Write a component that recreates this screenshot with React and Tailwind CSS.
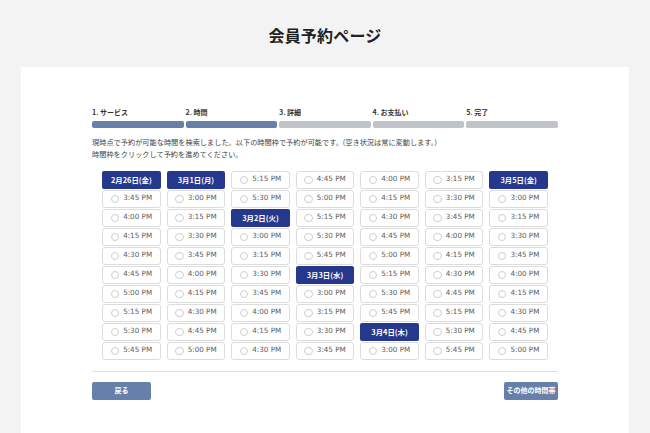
const steps = ["1. サービス", "2. 時間", "3. 詳細", "4. お支払い", "5. 完了"];

const columns = [
  ["2月26日(金)", "3:45", "4:00", "4:15", "4:30", "4:45", "5:00", "5:15", "5:30", "5:45"],
  ["3月1日(月)", "3:00", "3:15", "3:30", "3:45", "4:00", "4:15", "4:30", "4:45", "5:00"],
  ["5:15", "5:30", "3月2日(火)", "3:00", "3:15", "3:30", "3:45", "4:00", "4:15", "4:30"],
  ["4:45", "5:00", "5:15", "5:30", "5:45", "3月3日(水)", "3:00", "3:15", "3:30", "3:45"],
  ["4:00", "4:15", "4:30", "4:45", "5:00", "5:15", "5:30", "5:45", "3月4日(木)", "3:00"],
  ["3:15", "3:30", "3:45", "4:00", "4:15", "4:30", "4:45", "5:15", "5:30", "5:45"],
  ["3月5日(金)", "3:00", "3:15", "3:30", "3:45", "4:00", "4:15", "4:30", "4:45", "5:00"],
];

const Slot = ({ label }) => {
  if (label.includes("月")) {
    return (
      <div className="h-[17.5px] rounded-[2px] bg-[#26388c] flex items-center justify-center text-white font-bold text-[7.4px] font-['Noto_Sans_CJK_JP',sans-serif]">
        {label}
      </div>
    );
  }
  return (
    <div className="h-[17.5px] rounded-[3px] border border-[#dcdcdc] bg-white flex items-center justify-center gap-[4px] text-[#5c5c5c] text-[7.2px] font-['DejaVu_Sans',sans-serif]">
      <span className="w-[8.5px] h-[8.5px] rounded-full border border-[#cfcfcf] shrink-0" />
      <span>{label} PM</span>
    </div>
  );
};

const App = () => {
  return (
    <div className="min-h-[433px] bg-[#f3f3f3] flex flex-col font-['Noto_Sans_CJK_JP',sans-serif]">
      <header className="h-[67px] pt-[3px] flex items-center justify-center">
        <h1 className="text-[16px] font-bold text-[#222] tracking-[0.2px]">会員予約ページ</h1>
      </header>

      <main className="flex-1 mx-[21px] bg-white pt-[41px] px-[71px] pb-[30px]">
        {/* steps */}
        <div className="grid grid-cols-5 gap-x-[1.7px]">
          {steps.map((s, i) => (
            <div key={s} className="flex flex-col">
              <span className="h-[9px] leading-[9px] text-[7px] font-bold text-[#333]">{s}</span>
              <div
                className={
                  i < 2
                    ? "mt-[4px] h-[7px] rounded-[2px] bg-[#6680a9]"
                    : "mt-[4px] h-[7px] rounded-[2px] bg-[#c0c4c9]"
                }
              />
            </div>
          ))}
        </div>

        <p className="mt-[9px] text-[7.2px] leading-[11.5px] text-[#444]">
          現時点で予約が可能な時間を検索しました。以下の時間枠で予約が可能です。(空き状況は常に変動します。)
          <br />
          時間枠をクリックして予約を進めてください。
        </p>

        {/* slots */}
        <div className="mt-[11px] px-[10px] grid grid-cols-7 gap-x-[5.8px]">
          {columns.map((col, ci) => (
            <div key={ci} className="flex flex-col gap-y-[1.5px]">
              {col.map((label, ri) => (
                <Slot key={ri} label={label} />
              ))}
            </div>
          ))}
        </div>

        <div className="mt-[11px] border-t border-[#dedede]" />

        <div className="mt-[10px] flex justify-between">
          <button className="w-[59px] h-[18px] rounded-[2px] bg-[#6680a9] text-white text-[7px] font-bold">
            戻る
          </button>
          <button className="w-[54px] h-[18px] rounded-[2px] bg-[#6680a9] text-white text-[7px] font-bold whitespace-nowrap">
            その他の時間帯
          </button>
        </div>
      </main>
    </div>
  );
};

export default App;
